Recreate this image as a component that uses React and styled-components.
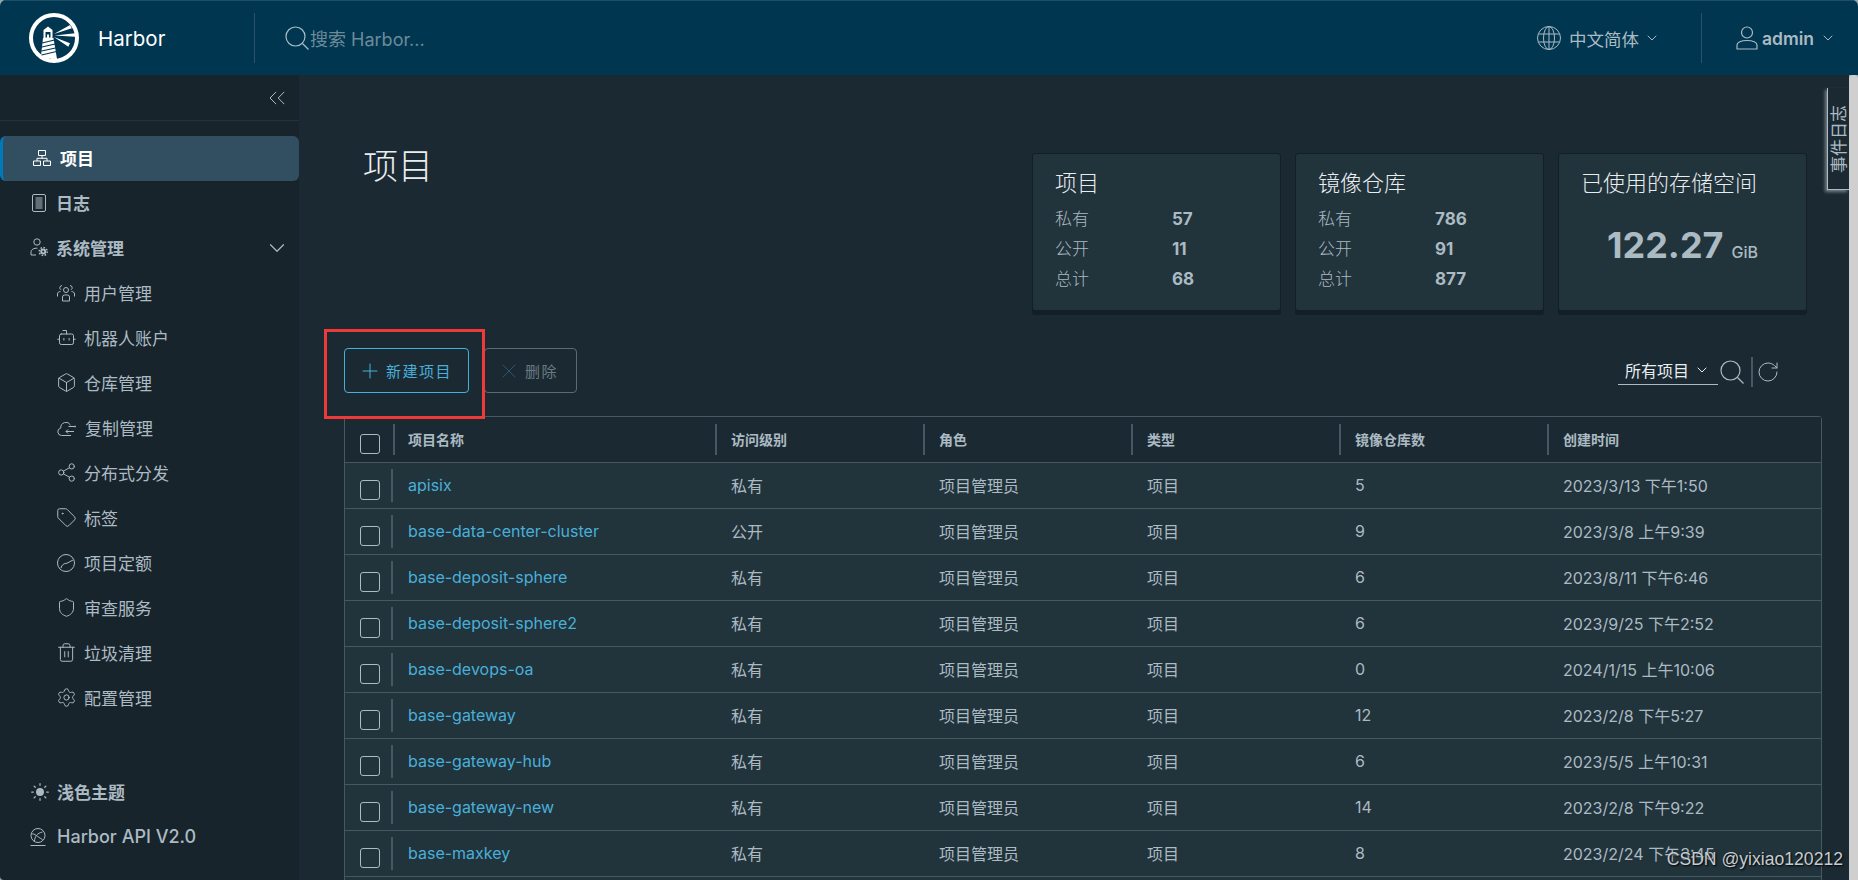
import styled, { createGlobalStyle } from 'styled-components';
import {
  Bot,
  Box,
  ChevronDown,
  ChevronsLeft,
  Plus,
  RotateCw,
  Share2,
  Shield,
  Tag,
  Trash2,
  Settings,
  X,
  Sun,
} from 'lucide-react';

const FONT = "Inter, 'Noto Sans CJK SC', sans-serif";

const rows = [
  ['apisix', '私有', '5', '2023/3/13 下午1:50'],
  ['base-data-center-cluster', '公开', '9', '2023/3/8 上午9:39'],
  ['base-deposit-sphere', '私有', '6', '2023/8/11 下午6:46'],
  ['base-deposit-sphere2', '私有', '6', '2023/9/25 下午2:52'],
  ['base-devops-oa', '私有', '0', '2024/1/15 上午10:06'],
  ['base-gateway', '私有', '12', '2023/2/8 下午5:27'],
  ['base-gateway-hub', '私有', '6', '2023/5/5 上午10:31'],
  ['base-gateway-new', '私有', '14', '2023/2/8 下午9:22'],
  ['base-maxkey', '私有', '8', '2023/2/24 下午3:45'],
];

function Logo() {
  return (
    <svg width="50" height="50" viewBox="0 0 50 50">
      <circle cx="25" cy="25" r="23" fill="none" stroke="#fff" strokeWidth="4" />
      <path d="M14.500 17 L19 13.500 L23.500 17 V25 H24.500 L28 46 Q20 47 12 43 L14 25 H14.500 Z" fill="#fff" />
      <path d="M16.500 19h5v5.500h-1.500v-3h-2v3h-1.500z" fill="#003650" />
      <path d="M13 30l12.500-3M13 34l13-3M12.500 38l14-3M12.500 42l15-3.500" stroke="#003650" strokeWidth="1.200" />
      <path d="M25 21l16-9 1.800 3.300zM25.500 22.500l20.500-2.200v3.400zM25 24l16 6.300-1.700 3.400z" fill="#fff" />
    </svg>
  );
}

function SearchIcon() {
  return (
    <svg width="24" height="24" viewBox="0 0 24 24" fill="none" stroke="currentColor" strokeWidth="1.200">
      <circle cx="10.500" cy="10.500" r="9.500" />
      <path d="M17.500 17.500l6 6" />
    </svg>
  );
}

function GlobeIcon() {
  return (
    <svg width="24" height="24" viewBox="0 0 24 24" fill="none" stroke="currentColor">
      <circle cx="12" cy="12" r="11.500" />
      <ellipse cx="12" cy="12" rx="5.500" ry="11.500" />
      <path d="M12 .5v23M1.500 8h21M1.500 16h21" />
    </svg>
  );
}

function UserIcon() {
  return (
    <svg width="22" height="24" viewBox="0 0 22 24" fill="none" stroke="currentColor" strokeWidth="1.200">
      <circle cx="11" cy="6.500" r="5.500" />
      <path d="M1 23v-4c0-2.500 4-4.500 10-4.500s10 2 10 4.500v4z" strokeLinejoin="round" />
    </svg>
  );
}

function Organization() {
  return (
    <svg width="18" height="16" viewBox="0 0 18 16" fill="none" stroke="currentColor">
      <path d="M5.500.5h7v5h-7zM.5 11h7v4.500h-7zM10.500 11h7v4.500h-7zM9 5.500v2.800M4 11V8.300h10V11" />
    </svg>
  );
}

function LogIcon() {
  return (
    <svg width="14" height="18" viewBox="0 0 14 18" fill="none" stroke="currentColor">
      <rect x=".5" y=".5" width="13" height="17" rx="1.500" />
      <path d="M3.500 4h7M3.500 6h7M3.500 8h7M3.500 10h7M3.500 12h7M3.500 14h7" />
    </svg>
  );
}

function UserCog() {
  return (
    <svg width="18" height="19" viewBox="0 0 18 19" fill="none" stroke="currentColor">
      <circle cx="7" cy="4" r="3.200" />
      <path d="M6 17H1v-3c0-2.500 3-4 6.500-3.800" />
      <circle cx="13.200" cy="13.500" r="2" strokeWidth="2" />
      <circle cx="13.200" cy="13.500" r="4" strokeWidth="1.500" strokeDasharray="1.600 1.500" />
    </svg>
  );
}

function UsersIcon() {
  return (
    <svg width="18" height="18" viewBox="0 0 18 18" fill="none" stroke="currentColor">
      <circle cx="9" cy="6" r="2.500" />
      <path d="M5.500 17v-4a2 2 0 0 1 2-2h3a2 2 0 0 1 2 2v4z" />
      <path d="M5 1.500a2.300 2.300 0 0 0-1 4.300M13 1.500a2.300 2.300 0 0 1 1 4.300M.5 12.500V10c0-1.500 1.200-2.500 3-2.500M17.500 12.500V10c0-1.500-1.200-2.500-3-2.500" />
    </svg>
  );
}

function CloudSync() {
  return (
    <svg width="19" height="18" viewBox="0 0 19 18" fill="none" stroke="currentColor">
      <path d="M14 16.500H4.500A3.800 3.800 0 0 1 3.800 9 5.200 5.200 0 0 1 13.500 6" />
      <path d="M9 12.500h8M11 10.500l-2 2 2 2M11.500 7.500h6" />
      <circle cx="18" cy="7.500" r=".6" fill="currentColor" />
    </svg>
  );
}

function Gauge() {
  return (
    <svg width="18" height="18" viewBox="0 0 18 18" fill="none" stroke="currentColor">
      <circle cx="9" cy="9" r="8.500" />
      <path d="M4 14c.6-3 3-4.800 6-4.800L16 6" />
    </svg>
  );
}

function ApiGlobe() {
  return (
    <svg width="16" height="18" viewBox="0 0 16 18" fill="none" stroke="currentColor">
      <circle cx="8" cy="7.500" r="7" />
      <path d="M1.500 6c3-1 6 3 11 5.500M4.500 13.500c0-5 3-8.500 8-9.500M.5 17.500h15" />
    </svg>
  );
}

export default function App() {
  return (
    <>
      <GlobalStyle />
      <Page>
        <Header>
          <Brand>
            <Logo />
            <BrandName>Harbor</BrandName>
          </Brand>
          <SearchBox>
            <SearchIcon />
            搜索 Harbor...
          </SearchBox>
          <HeaderAction>
            <GlobeIcon />
            <span>中文简体</span>
            <ChevronDown size={16} strokeWidth={1} absoluteStrokeWidth />
          </HeaderAction>
          <UserMenu>
            <UserIcon />
            <strong>admin</strong>
            <ChevronDown size={16} strokeWidth={1} absoluteStrokeWidth />
          </UserMenu>
        </Header>
        <Body>
          <Sidebar>
            <Collapse>
              <ChevronsLeft size={28} strokeWidth={1} absoluteStrokeWidth />
            </Collapse>
            <Nav>
              <NavItem $active $bold>
                <Organization />
                项目
              </NavItem>
              <LogItem $bold>
                <LogIcon />
                日志
              </LogItem>
              <NavItem $bold $gap={8}>
                <UserCog />
                系统管理
                <Caret>
                  <ChevronDown size={26} strokeWidth={1.2} absoluteStrokeWidth />
                </Caret>
              </NavItem>
              <SubItem><UsersIcon />用户管理</SubItem>
              <SubItem><Bot size={21} strokeWidth={1} absoluteStrokeWidth />机器人账户</SubItem>
              <SubItem><Box size={21} strokeWidth={1} absoluteStrokeWidth />仓库管理</SubItem>
              <SubItem><CloudSync />复制管理</SubItem>
              <SubItem><Share2 size={21} strokeWidth={1} absoluteStrokeWidth />分布式分发</SubItem>
              <SubItem><Tag size={21} strokeWidth={1} absoluteStrokeWidth />标签</SubItem>
              <SubItem><Gauge />项目定额</SubItem>
              <SubItem><Shield size={21} strokeWidth={1} absoluteStrokeWidth />审查服务</SubItem>
              <SubItem><Trash2 size={21} strokeWidth={1} absoluteStrokeWidth />垃圾清理</SubItem>
              <SubItem><Settings size={21} strokeWidth={1} absoluteStrokeWidth />配置管理</SubItem>
            </Nav>
            <SideFooter>
              <NavItem $bold $gap={7}>
                <Sun size={20} strokeWidth={1.5} fill="currentColor" />
                浅色主题
              </NavItem>
              <NavItem $medium $gap={11}>
                <ApiGlobe />
                Harbor API V2.0
              </NavItem>
            </SideFooter>
          </Sidebar>
          <Content>
            <EventTab>
              <span>事件日志</span>
            </EventTab>
            <TopRow>
              <PageTitle>项目</PageTitle>
              <Cards>
                <Card>
                  <CardTitle>项目</CardTitle>
                  <Stat><label>私有</label><b>57</b></Stat>
                  <Stat><label>公开</label><b>11</b></Stat>
                  <Stat><label>总计</label><b>68</b></Stat>
                </Card>
                <Card>
                  <CardTitle>镜像仓库</CardTitle>
                  <Stat><label>私有</label><b>786</b></Stat>
                  <Stat><label>公开</label><b>91</b></Stat>
                  <Stat><label>总计</label><b>877</b></Stat>
                </Card>
                <Card>
                  <CardTitle>已使用的存储空间</CardTitle>
                  <Storage>122.27<small>GiB</small></Storage>
                </Card>
              </Cards>
            </TopRow>
            <Toolbar>
              <Highlight />
              <OutlineButton $primary>
                <Plus size={24} strokeWidth={1} absoluteStrokeWidth />
                新建项目
              </OutlineButton>
              <OutlineButton>
                <X size={24} strokeWidth={1} absoluteStrokeWidth />
                删除
              </OutlineButton>
              <Filters>
                <FilterSelect>
                  所有项目
                  <ChevronDown size={16} strokeWidth={1} absoluteStrokeWidth />
                </FilterSelect>
                <SearchIcon />
                <ToolDivider />
                <RotateCw size={24} strokeWidth={1} absoluteStrokeWidth />
              </Filters>
            </Toolbar>
            <Table>
              <HeadRow>
                <CheckCell><Check /></CheckCell>
                <HeadCell>项目名称</HeadCell>
                <HeadCell>访问级别</HeadCell>
                <HeadCell>角色</HeadCell>
                <HeadCell>类型</HeadCell>
                <HeadCell>镜像仓库数</HeadCell>
                <HeadCell>创建时间</HeadCell>
              </HeadRow>
              {rows.map(([name, access, count, created]) => (
                <Row key={name}>
                  <CheckCell><Check /></CheckCell>
                  <NameCell>{name}</NameCell>
                  <Cell>{access}</Cell>
                  <Cell>项目管理员</Cell>
                  <Cell>项目</Cell>
                  <Cell>{count}</Cell>
                  <Cell>{created}</Cell>
                </Row>
              ))}
            </Table>
            <Watermark>CSDN @yixiao120212</Watermark>
          </Content>
          <Scrollbar />
        </Body>
      </Page>
    </>
  );
}

const GlobalStyle = createGlobalStyle`
  html, body {
    margin: 0;
    height: 100%;
    overflow: hidden;
    background: #9aa5ab;
  }
  * {
    box-sizing: border-box;
  }
`;

const Page = styled.div`
  width: 1858px;
  height: 880px;
  display: flex;
  flex-direction: column;
  overflow: hidden;
  border-radius: 6px 6px 0 4px;
  font-family: ${FONT};
  color: #acbac3;
`;

const Header = styled.header`
  height: 75px;
  flex: none;
  display: flex;
  align-items: center;
  background: #003650;
  border-top: 1px solid #1d5068;
`;

const Brand = styled.div`
  width: 255px;
  height: 50px;
  padding-left: 29px;
  display: flex;
  align-items: center;
  gap: 19px;
  border-right: 1px solid #2a5268;
`;

const BrandName = styled.span`
  color: #fff;
  font-size: 20.500px;
`;

const SearchBox = styled.div`
  flex: 1;
  padding-left: 30px;
  display: flex;
  align-items: center;
  gap: 1px;
  font-size: 18px;
  color: #6d8a99;
  svg {
    color: #a9bcc7;
  }
`;

const HeaderAction = styled.div`
  display: flex;
  align-items: center;
  gap: 8px;
  width: 165px;
  height: 50px;
  font-size: 17.500px;
  color: #acbac3;
  border-right: 1px solid #2a5268;
  .lucide {
    margin-left: -3px;
  }
`;

const UserMenu = styled(HeaderAction)`
  width: 156px;
  padding-left: 34px;
  gap: 4px;
  border-right: none;
  strong {
    font-weight: 600;
  }
  .lucide {
    margin-left: 2px;
  }
`;

const Body = styled.div`
  flex: 1;
  min-height: 0;
  display: flex;
`;

const Sidebar = styled.aside`
  width: 299px;
  flex: none;
  display: flex;
  flex-direction: column;
  background: #17242b;
`;

const Collapse = styled.div`
  height: 46px;
  flex: none;
  display: flex;
  align-items: center;
  justify-content: flex-end;
  padding-right: 8px;
  border-bottom: 1px solid #24323a;
  color: #acbac3;
`;

const Nav = styled.nav`
  margin-top: 15px;
  display: flex;
  flex-direction: column;
  flex: 1;
`;

const NavItem = styled.div`
  height: 45px;
  flex: none;
  display: flex;
  align-items: center;
  gap: ${(p) => p.$gap ?? 9}px;
  padding-left: 30px;
  padding-bottom: 2px;
  font-size: ${(p) => (p.$medium ? '18px' : '17px')};
  font-weight: ${(p) => (p.$bold ? 700 : p.$medium ? 500 : 400)};
  color: ${(p) => (p.$active ? '#fff' : '#acbac3')};
  background: ${(p) => (p.$active ? '#324f62' : 'transparent')};
  border-radius: ${(p) => (p.$active ? '6px' : '0')};
  border-left: ${(p) => (p.$active ? '3px solid #0079b8' : 'none')};
`;

const LogItem = styled(NavItem)`
  padding-left: 32px;
  gap: 10px;
`;

const SubItem = styled(NavItem)`
  padding-left: 57px;
  gap: 9px;
  font-weight: 400;
  svg {
    flex: none;
  }
  .lucide {
    margin: 0 -1.500px;
  }
`;

const Caret = styled.span`
  margin-left: auto;
  margin-right: 9px;
  display: flex;
`;

const SideFooter = styled.div`
  padding-bottom: 20px;
`;

const Content = styled.main`
  position: relative;
  flex: 1;
  min-width: 0;
  padding: 0 27px 0 45px;
  background: #1b2a32;
`;

const EventTab = styled.div`
  position: absolute;
  top: 13px;
  right: 0;
  width: 22px;
  height: 102px;
  background: #1b2a32;
  border-left: 1px solid #acbac3;
  border-bottom: 1px solid #acbac3;
  box-shadow: -2px 2px 3px rgba(255, 255, 255, 0.4);
  display: flex;
  align-items: center;
  justify-content: center;
  span {
    writing-mode: vertical-rl;
    text-orientation: sideways;
    transform: rotate(180deg);
    font-size: 17px;
    line-height: 20px;
    white-space: nowrap;
    color: #acbac3;
  }
`;

const TopRow = styled.div`
  height: 273px;
  padding-top: 78px;
  display: flex;
  justify-content: space-between;
`;

const PageTitle = styled.h1`
  margin: -11px 0 0 19px;
  font-size: 35px;
  line-height: 48px;
  font-weight: 300;
  color: #eaedf0;
`;

const Cards = styled.div`
  display: flex;
  gap: 14px;
  margin-right: 15px;
  height: 161px;
`;

const Card = styled.div`
  width: 249px;
  height: 158px;
  padding: 14px 22px;
  background: #21333b;
  border: 1px solid #131f26;
  border-radius: 3px;
  box-shadow: 0 4px 0 #131f26;
`;

const CardTitle = styled.div`
  font-size: 22px;
  font-weight: 300;
  line-height: 30px;
  margin-bottom: 7px;
  color: #eaedf0;
  white-space: nowrap;
`;

const Stat = styled.div`
  display: flex;
  height: 30px;
  align-items: baseline;
  font-size: 17px;
  font-weight: 300;
  label {
    width: 117px;
  }
  b {
    font-size: 17px;
    font-weight: 700;
  }
`;

const Storage = styled.div`
  margin-top: 25px;
  text-align: center;
  font-size: 36px;
  font-weight: 700;
  color: #acbac3;
  white-space: nowrap;
  small {
    font-size: 16px;
    font-weight: 500;
    margin-left: 8px;
  }
`;

const Toolbar = styled.div`
  position: relative;
  height: 68px;
  display: flex;
  align-items: flex-start;
  gap: 15px;
`;

const Highlight = styled.div`
  position: absolute;
  left: -20px;
  top: -19px;
  width: 161px;
  height: 90px;
  border: 3px solid #f03a3a;
  pointer-events: none;
`;

const OutlineButton = styled.button`
  height: 45px;
  padding: 0 ${(p) => (p.$primary ? '16px' : '18px')} 0 ${(p) => (p.$primary ? '13px' : '12px')};
  display: flex;
  align-items: center;
  gap: 4px;
  background: transparent;
  border: 1px solid ${(p) => (p.$primary ? '#49afd9' : '#5b6b74')};
  border-radius: 4px;
  font-family: ${FONT};
  font-size: 15px;
  letter-spacing: 1.500px;
  color: ${(p) => (p.$primary ? '#49afd9' : '#6b7a82')};
  svg {
    color: ${(p) => (p.$primary ? '#49afd9' : '#2f5568')};
  }
`;

const Filters = styled.div`
  margin-left: auto;
  margin-right: 42px;
  height: 40px;
  margin-top: 4px;
  display: flex;
  align-items: center;
  color: #acbac3;
`;

const FilterSelect = styled.div`
  width: 100px;
  height: 30px;
  padding-left: 7px;
  margin-right: 2px;
  margin-bottom: 4px;
  display: flex;
  align-items: center;
  gap: 5px;
  border-bottom: 1px solid #acbac3;
  font-size: 16px;
  white-space: nowrap;
  color: #eaedf0;
`;

const ToolDivider = styled.span`
  width: 2px;
  height: 30px;
  margin: 0 3px 0 7px;
  background: #485863;
`;

const Table = styled.div`
  min-height: 480px;
  border: 1px solid #485863;
  border-radius: 3px 3px 0 0;
  background: #21333b;
`;

const HeadRow = styled.div`
  height: 46px;
  display: grid;
  grid-template-columns: 48px 322px 208px 208px 208px 208px 1fr;
  align-items: stretch;
  border-bottom: 1px solid #485863;
  background: #1b2a32;
`;

const Row = styled(HeadRow)`
  background: #21333b;
`;

const CheckCell = styled.div`
  display: flex;
  align-items: center;
  padding-left: 15px;
  margin-top: 9px;
`;

const Check = styled.span`
  display: block;
  width: 20px;
  height: 20px;
  border: 1px solid #acbac3;
  border-radius: 3px;
`;

const HeadCell = styled.div`
  position: relative;
  display: flex;
  align-items: center;
  padding-left: 16px;
  padding-bottom: 2px;
  font-size: 14px;
  font-weight: 700;
  color: #acbac3;
  &:nth-child(2) {
    padding-left: 15px;
  }
  &::before {
    content: '';
    position: absolute;
    left: 0;
    top: 7px;
    bottom: 7px;
    width: 2px;
    background: #485863;
  }
`;

const Cell = styled.div`
  display: flex;
  align-items: center;
  padding-left: 16px;
  padding-bottom: 2px;
  font-size: 16px;
  color: #acbac3;
  white-space: nowrap;
`;

const NameCell = styled(Cell)`
  position: relative;
  padding-left: 15px;
  color: #49afd9;
  &::before {
    content: '';
    position: absolute;
    left: -2px;
    top: 6px;
    bottom: 6px;
    width: 2px;
    background: #485863;
  }
`;

const Watermark = styled.div`
  position: absolute;
  right: 6px;
  bottom: 10px;
  font-family: 'Liberation Sans', sans-serif;
  font-size: 17.600px;
  color: #c6ccd0;
  text-shadow: 1px 1px 2px #000;
  white-space: nowrap;
`;

const Scrollbar = styled.div`
  width: 9px;
  flex: none;
  background: #cfcfcf;
  border-radius: 4px 4px 0 0;
`;
